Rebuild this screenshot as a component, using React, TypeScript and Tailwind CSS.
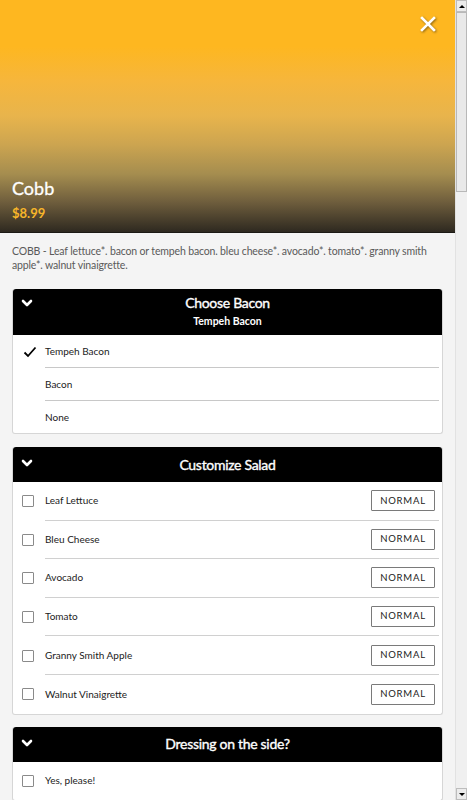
import React from "react";

const font = { fontFamily: "Lato, 'Open Sans', sans-serif" };

function Chevron({ top }: { top: string }) {
  return (
    <svg width="12" height="9" viewBox="0 0 12 9" className={`absolute left-[8px] ${top}`}>
      <path d="M2 2 L6 6 L10 2" fill="none" stroke="white" strokeWidth="2.6" strokeLinecap="round" strokeLinejoin="round" />
    </svg>
  );
}

function CardHeader({ title, sub }: { title: string; sub?: string }) {
  return (
    <div className={`relative bg-black text-white rounded-t-[3px] flex flex-col items-center ${sub ? "h-[46px] pt-[5px]" : "h-[35px] justify-center"}`}>
      <Chevron top={sub ? "top-[10px]" : "top-[12px]"} />
      <div className="text-[14px] leading-[18px] tracking-[-0.3px] [-webkit-text-stroke:0.35px_white]">{title}</div>
      {sub && <div className="text-[10.5px] font-bold leading-[14px] mt-[2px]">{sub}</div>}
    </div>
  );
}

function Check() {
  return <div className="w-[12px] h-[12px] border border-[#8a8a8a] rounded-[1px] bg-white shrink-0" />;
}

const salad = ["Leaf Lettuce", "Bleu Cheese", "Avocado", "Tomato", "Granny Smith Apple", "Walnut Vinaigrette"];

export default function App() {
  return (
    <div className="flex w-[467px] h-[800px] overflow-hidden bg-[#f4f4f4]" style={font}>
      <div className="w-[455px] shrink-0">
        <div className="relative h-[233px] border-b border-[#1c1a15] bg-[linear-gradient(to_bottom,#FEB720_0%,#FEB720_20%,#F6B63C_35%,#E8B44C_50%,#CDA550_62%,#A58D4F_75%,#6F5E3D_87%,#2E2920_100%)]">
          <svg width="16" height="16" viewBox="0 0 16 16" className="absolute left-[420px] top-[16px]" style={{ filter: "drop-shadow(1px 1px 1px rgba(0,0,0,0.45))" }}>
            <path d="M2 2 L14 14 M14 2 L2 14" stroke="white" strokeWidth="2.6" strokeLinecap="square" />
          </svg>
          <div className="absolute left-[12px] top-[177px] text-white text-[18px] leading-[22px] [-webkit-text-stroke:0.3px_white]">Cobb</div>
          <div className="absolute left-[12px] top-[205px] text-[#F7B52A] text-[13px] font-bold leading-[16px]">$8.99</div>
        </div>

        <div className="px-[12px]">
          <p className="text-[10.5px] leading-[14px] text-[#5a5a5a] mt-[11px] tracking-[-0.15px]">
            COBB - Leaf lettuce*. bacon or tempeh bacon. bleu cheese*. avocado*. tomato*. granny smith apple*. walnut vinaigrette.
          </p>

          <div className="mt-[17px] w-[431px] bg-white rounded-[3px] border border-[#d6d6d6] border-t-0">
            <CardHeader title="Choose Bacon" sub="Tempeh Bacon" />
            <div className="flex items-center h-[33px]">
              <div className="w-[32px] flex justify-center pl-[2px]">
                <svg width="14" height="12" viewBox="0 0 14 12">
                  <path d="M1.5 6.5 L5 10 L12.5 1.5" fill="none" stroke="black" strokeWidth="1.8" />
                </svg>
              </div>
              <div className="flex-1 h-full flex items-center border-b border-[#c8c8c8] text-[10px] text-[#222] mr-[3px]">Tempeh Bacon</div>
            </div>
            <div className="flex items-center h-[33px]">
              <div className="w-[32px]" />
              <div className="flex-1 h-full flex items-center border-b border-[#c8c8c8] text-[10px] text-[#222] mr-[3px]">Bacon</div>
            </div>
            <div className="flex items-center h-[32px]">
              <div className="w-[32px]" />
              <div className="flex-1 h-full flex items-center text-[10px] text-[#222]">None</div>
            </div>
          </div>

          <div className="mt-[13px] w-[431px] bg-white rounded-[3px] border border-[#d6d6d6] border-t-0">
            <CardHeader title="Customize Salad" />
            {salad.map((s, i) => (
              <div key={s} className="flex items-center h-[38.6px]">
                <div className="w-[32px] flex justify-center pr-[2px]">
                  <Check />
                </div>
                <div className={`flex-1 h-full flex items-center justify-between mr-[3px] ${i < salad.length - 1 ? "border-b border-[#d0d0d0]" : ""}`}>
                  <span className="text-[10px] text-[#222]">{s}</span>
                  <div className="w-[64px] h-[21px] border border-[#7a7a7a] rounded-[1px] flex items-center justify-center text-[9.5px] tracking-[0.8px] text-[#222] mr-[4px]">
                    NORMAL
                  </div>
                </div>
              </div>
            ))}
          </div>

          <div className="mt-[12px] w-[431px] bg-white rounded-[3px] border border-[#d6d6d6] border-t-0">
            <CardHeader title="Dressing on the side?" />
            <div className="flex items-center h-[38px]">
              <div className="w-[32px] flex justify-center pr-[2px]">
                <Check />
              </div>
              <span className="text-[10px] text-[#222]">Yes, please!</span>
            </div>
          </div>
        </div>
      </div>

      <div className="w-[12px] h-[800px] bg-[#f0f0f0] border-l border-[#e2e2e2] flex flex-col">
        <div className="h-[12px] bg-[#ececec] border border-[#bdbdbd] flex items-center justify-center">
          <div className="w-0 h-0 border-l-[3px] border-r-[3px] border-b-[3px] border-l-transparent border-r-transparent border-b-black" />
        </div>
        <div className="h-[180px] bg-[#e9e9e9] border border-[#b8b8b8]" />
        <div className="flex-1" />
        <div className="h-[12px] bg-[#ececec] border border-[#bdbdbd] flex items-center justify-center">
          <div className="w-0 h-0 border-l-[3px] border-r-[3px] border-t-[3px] border-l-transparent border-r-transparent border-t-black" />
        </div>
      </div>
    </div>
  );
}
